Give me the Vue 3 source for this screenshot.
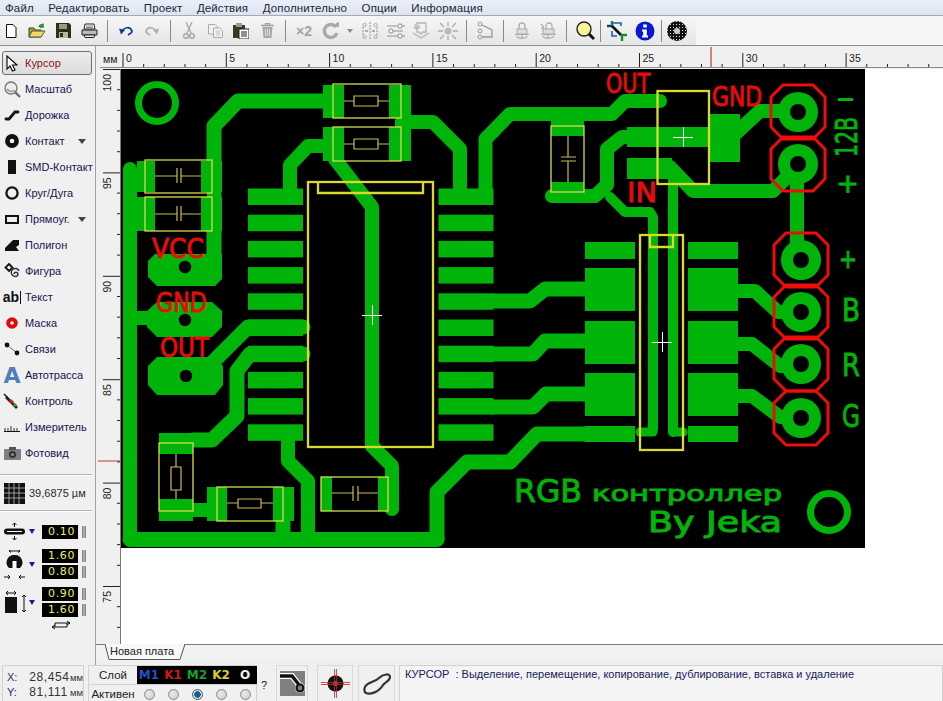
<script setup>
const menu = ['Файл', 'Редактировать', 'Проект', 'Действия', 'Дополнительно', 'Опции', 'Информация']

const hMajor = [0, 5, 10, 15, 20, 25, 30, 35, 40].map((n, i) => ({ n, x: 123 + 103.3 * i })).filter(t => t.x < 943)
const hMinor = []
for (let i = 0; i < 40; i++) { const x = 123 + 20.66 * i; if (i % 5 && x < 943) hMinor.push(x) }
const vMajor = [100, 95, 90, 85, 80, 75].map((n, i) => ({ n, y: 70 + 103.4 * i }))
const vMinor = []
for (let i = 0; i < 28; i++) { if (i % 5) vMinor.push(70 + 20.68 * i) }

const traces = [
  [15, 'M323 102H238L214 127V262'],
  [14, 'M130 170V540'],
  [15, 'M130 540.5H437'],
  [14, 'M323 147H308L290 166V192'],
  [14, 'M335 160L372 208V447L392 467V510'],
  [14, 'M402 123H433L460 150V192'],
  [14, 'M485.5 192V140L510 115H612L625 102H660'],
  [14, 'M552 197H595L607 186V150L622 138H660'],
  [14, 'M735 135L760 112H797'],
  [14, 'M670 168L693 192H773L797 168'],
  [14, 'M797 165V261'],
  [10, 'M673 177V433'],
  [10, 'M610 198L625 213H650L653 218V430'],
  [15, 'M585 435H537L510 463H467L437 493V540'],
  [15, 'M493 302H530L545 290H585'],
  [15, 'M493 355H533L545 342H585'],
  [15, 'M493 408H533L546 395H585'],
  [14, 'M738 292H755L778 313H798'],
  [14, 'M738 345H752L780 367H798'],
  [14, 'M738 397H752L780 418H798'],
  [15, 'M193 441H212L237 417V372L250 355H303'],
  [15, 'M213 363L248 328H303'],
  [14, 'M288 443V462L308 482V535'],
  [14, 'M193 511H207'],
  [15, 'M283 520V535'],
  [14, 'M130 319H150'],
  [14, 'M402 123V145'],
  [9, 'M640 433H653'],
  [9, 'M673 433H683'],
]

const pads = [
  [323, 86, 21, 33], [389, 86, 22, 33], [323, 128, 21, 34], [389, 128, 22, 34],
  [137, 162, 18, 31], [201, 162, 21, 31], [137, 198, 18, 34], [201, 198, 21, 34],
  [551, 118, 33, 19], [551, 183, 33, 20],
  [627, 128, 81, 20], [710, 115, 30, 48], [627, 159, 45, 21],
  [585, 243, 50, 17], [585, 269, 50, 43], [585, 322, 50, 43], [585, 374, 50, 43], [585, 427, 50, 16],
  [688, 243, 50, 17], [688, 269, 50, 43], [688, 322, 50, 43], [688, 374, 50, 43], [688, 427, 50, 16],
  [159, 434, 34, 21], [159, 500, 34, 22], [207, 488, 20, 34], [273, 488, 21, 34],
  [321, 478, 11, 34], [378, 478, 21, 34],
]
const pins = []
for (let i = 0; i < 10; i++) pins.push(189.5 + 26.2 * i)

const octPads = [
  '148,262 155,255 222,255 222,280 215,287 157,287 148,278',
  '147,312 157,303 212,303 222,312 222,328 212,338 157,338 147,328',
  '148,367 157,358 215,358 223,367 223,386 215,396 157,396 148,386',
]
const holes = [[185, 268], [185, 321], [186, 377]]
const rings = [[798, 113], [798, 165], [801, 261], [801, 313], [801, 365], [801, 419]]
function oct([x, y]) {
  const a = 27, c = 12
  return [[x - a + c, y - a], [x + a - c, y - a], [x + a, y - a + c], [x + a, y + a - c], [x + a - c, y + a], [x - a + c, y + a], [x - a, y + a - c], [x - a, y - a + c]].map(p => p.join(',')).join(' ')
}

const smdBoxes = [[333, 85, 68, 34], [333, 128, 68, 34], [145, 161, 67, 33], [145, 198, 67, 34], [551, 127, 33, 66], [159, 444, 34, 68], [217, 488, 66, 34], [321, 478, 67, 34]]
const symbols = [
  'M344 102H354M378 102H389M354 97H378V107H354Z',
  'M344 145H354M378 145H389M354 140H378V150H354Z',
  'M155 177H177M181 177H201M177 169V184M181 169V184',
  'M155 215H177M181 215H201M177 207V222M181 207V222',
  'M568 137V158M568 162V183M561 158H576M561 162H576',
  'M176 455V468M176 491V500M171 468H181V491H171Z',
  'M227 504H238M261 504H273M238 500H261V509H238Z',
  'M332 494H353M358 494H378M353 487V502M358 487V502',
]
const crosses = [[372, 316], [662, 343], [683, 138]]

const redLabels = [
  ['OUT', 606, 94, 44], ['GND', 712, 107, 50], ['IN', 627, 203, 30],
  ['VCC', 152, 259, 52], ['GND', 156, 313, 51], ['OUT', 160, 358, 49],
]
const greenLetters = [['+', 839, 269, 18, 26], ['B', 842, 322, 18, 32], ['R', 842, 377, 18, 32], ['G', 842, 428, 18, 32]]

const layers = [
  { t: 'M1', c: 'c-blue' }, { t: 'K1', c: 'c-red' }, { t: 'M2', c: 'c-green' }, { t: 'K2', c: 'c-yellow' }, { t: 'O', c: 'c-white' },
]
</script>

<template>
  <div class="app">
    <div class="menu">
      <span v-for="m in menu" :key="m" class="menu-item">{{ m }}</span>
    </div>

    <div class="toolbar">
      <div class="tools-on">
        <span class="tb"><svg width="14" height="14" viewBox="0 0 14 14"><path d="M2.5 .5H9L12 3.5V13.5H2.5Z" fill="#fff" stroke="#111"/></svg></span>
        <span class="tb"><svg width="18" height="16" viewBox="0 0 18 16"><path d="M1 5H6L7 7H13V14H1Z" fill="#b09a30" stroke="#443"/><path d="M1 14L4 8H17L13 14Z" fill="#f2d860" stroke="#554"/><path d="M11 4Q12 1 15 2M15 .5V4H12" fill="none" stroke="#1a7a1a" stroke-width="1.4"/></svg></span>
        <span class="tb"><svg width="15" height="15" viewBox="0 0 15 15"><path d="M0 0H13L15 2V15H0Z" fill="#2c3018"/><rect x="3" y="1" width="8" height="5" fill="#9a9a78"/><rect x="3" y="9" width="9" height="6" fill="#b8b8a0"/><rect x="4" y="10" width="3" height="4" fill="#2c3018"/></svg></span>
        <span class="tb"><svg width="17" height="15" viewBox="0 0 17 15"><path d="M4 1H13L14 6H3Z" fill="#fff" stroke="#222"/><path d="M1 7H16V12H1Z" fill="#bbb" stroke="#222"/><path d="M3 12H14L13 14.500H4Z" fill="#eee" stroke="#222"/><path d="M5 3H12M5 4.500H12" stroke="#555" stroke-width=".7"/></svg></span>
        <i class="sep"></i>
        <span class="tb"><svg width="14" height="11" viewBox="0 0 14 11"><path d="M3 7C5 2 11 1 13 6C13 8 11 9 9 10" fill="none" stroke="#123a9a" stroke-width="1.7"/><path d="M0 3.500L6 5L2 9.500Z" fill="#123a9a"/></svg></span>
        <span class="tb"><svg width="14" height="11" viewBox="0 0 14 11"><path d="M11 7C9 2 3 1 1 6C1 8 3 9 5 10" fill="none" stroke="#b0b0b0" stroke-width="1.7"/><path d="M14 3.500L8 5L12 9.500Z" fill="#b0b0b0"/></svg></span>
        <i class="sep"></i>
        <span class="tb"><svg width="12" height="17" viewBox="0 0 12 17"><path d="M3 0L8 11M9 0L4 11" stroke="#a8a8a8" stroke-width="1.3" fill="none"/><circle cx="3" cy="14" r="2.300" fill="none" stroke="#a0a0a0" stroke-width="1.3"/><circle cx="9" cy="14" r="2.300" fill="none" stroke="#a0a0a0" stroke-width="1.3"/></svg></span>
        <span class="tb"><svg width="15" height="14" viewBox="0 0 15 14"><path d="M.5 .5H7L9 2.500V10H.5Z" fill="#f2f2f2" stroke="#aaa"/><path d="M5.500 4H12L14.500 6.500V13.500H5.500Z" fill="#f6f6f6" stroke="#aaa"/><path d="M7.500 7H12.500M7.500 9H12.500M7.500 11H12.500" stroke="#bbb"/></svg></span>
        <span class="tb"><svg width="16" height="16" viewBox="0 0 16 16"><rect x="0" y="2" width="12" height="13" fill="#3a3a22"/><rect x="3" y="0" width="6" height="4" fill="#999"/><rect x="6" y="6" width="10" height="10" fill="#fff" stroke="#222"/><path d="M8 9H14M8 11H14M8 13H14" stroke="#223"/></svg></span>
        <span class="tb"><svg width="13" height="15" viewBox="0 0 13 15"><path d="M0 2.500H13M4.500 2.500V.5H8.500V2.500" fill="none" stroke="#a0a0a0" stroke-width="1.500"/><path d="M1.500 4H11.500L10.500 15H2.500Z" fill="#a8a8a8"/><path d="M4.500 6V13M6.500 6V13M8.500 6V13" stroke="#ddd"/></svg></span>
        <i class="sep"></i>
        <span class="tb x2">×2</span>
        <span class="tb wide"><svg width="18" height="18" viewBox="0 0 18 18"><path d="M14 5A6.500 6.500 0 1 0 15 11" fill="none" stroke="#aaa" stroke-width="3.400"/><path d="M10 5H17V-1Z" fill="#aaa"/></svg></span>
        <span class="drop"></span>
        <span class="tb"><svg width="16" height="18" viewBox="0 0 16 18"><path d="M8 0V18M1 5V13M15 5V13" stroke="#aaa" stroke-dasharray="2 1" stroke-width="1.300"/><path d="M3 9H6M10 9H13" stroke="#999" stroke-width="1.500"/><circle cx="2.500" cy="3" r="1.600" fill="none" stroke="#aaa"/><circle cx="13.500" cy="3" r="1.600" fill="none" stroke="#aaa"/><circle cx="2.500" cy="15" r="1.600" fill="none" stroke="#aaa"/><circle cx="13.500" cy="15" r="1.600" fill="none" stroke="#aaa"/></svg></span>
        <span class="tb"><svg width="20" height="18" viewBox="0 0 20 18"><path d="M1 4H19M1 14H19M3 9H17" stroke="#b0b0b0" stroke-width="1.500"/><circle cx="14" cy="4" r="2" fill="#fff" stroke="#aaa" stroke-width="1.300"/><circle cx="5" cy="9" r="2" fill="#fff" stroke="#aaa" stroke-width="1.300"/><circle cx="14" cy="14" r="2" fill="#fff" stroke="#aaa" stroke-width="1.300"/></svg></span>
        <span class="tb"><svg width="20" height="17" viewBox="0 0 20 17"><path d="M2 6H7V3M5 1H14V10H11L9 12L7 10H5ZM1 11L9 16L17 11" fill="none" stroke="#b4b4b4" stroke-width="1.300"/><path d="M3 2V6" stroke="#aaa"/></svg></span>
        <span class="tb"><svg width="20" height="18" viewBox="0 0 20 18"><circle cx="10" cy="9" r="3.500" fill="#bbb"/><path d="M10 0V4M10 14V18M0 9H5M15 9H20M2 1L6 5M18 1L14 5M2 17L6 13M18 17L14 13" stroke="#aaa" stroke-width="1.300"/></svg></span>
        <i class="sep"></i>
        <span class="tb"><svg width="17" height="19" viewBox="0 0 17 19"><circle cx="3" cy="3" r="2" fill="none" stroke="#999"/><circle cx="3" cy="10" r="2" fill="none" stroke="#999"/><circle cx="3" cy="16" r="2" fill="none" stroke="#999"/><path d="M5 4L15 9V16H5" fill="none" stroke="#999" stroke-width="1.300"/></svg></span>
        <i class="sep"></i>
        <span class="tb"><svg width="14" height="18" viewBox="0 0 14 18"><path d="M4 7V4A3 3 0 0 1 10 4V7" fill="none" stroke="#b0b0b0" stroke-width="1.400"/><rect x="2" y="7" width="10" height="5" fill="#ddd" stroke="#aaa"/><path d="M0 12.500H14M7 13V17M2 14C3 17 11 17 12 14" fill="none" stroke="#aaa" stroke-width="1.200"/></svg></span>
        <span class="tb"><svg width="16" height="18" viewBox="0 0 16 18"><path d="M6 7V4A3 3 0 0 1 12 4V7M1 2L4 5M1 6H4" fill="none" stroke="#b0b0b0" stroke-width="1.300"/><rect x="3" y="7" width="11" height="5" fill="#ddd" stroke="#aaa"/><path d="M1 12.500H16M8 13V17M3 14C4 17 12 17 14 14" fill="none" stroke="#aaa" stroke-width="1.200"/></svg></span>
        <i class="sep"></i>
        <span class="tb"><svg width="19" height="20" viewBox="0 0 19 20"><circle cx="8" cy="8" r="7" fill="#f7f39a" stroke="#222" stroke-width="1.400"/><path d="M13 13L18 18" stroke="#111" stroke-width="3"/></svg></span>
        <i class="sep tight"></i>
        <span class="tb wide2"><svg width="20" height="20" viewBox="0 0 20 20"><path d="M0 5H5" stroke="#0a30b0" stroke-width="2.400"/><path d="M5 0V5M15 14V20" stroke="#0a9030" stroke-width="2.400"/><path d="M5 5L14 14" stroke="#111" stroke-width="2.600"/><path d="M14 14H20" stroke="#0a9030" stroke-width="2.400"/><path d="M6 2H14V5M5 10V15H10" fill="none" stroke="#1060c0" stroke-width="1.600"/></svg></span>
        <span class="tb wide2"><svg width="20" height="20" viewBox="0 0 20 20"><circle cx="10" cy="10" r="9.500" fill="#0a18d0"/><rect x="8.200" y="3.500" width="3.600" height="3" fill="#fff"/><path d="M7 8.500H11.800V14.500H13V16.500H7V14.500H8.200V10.500H7Z" fill="#fff"/></svg></span>
        <i class="sep tight"></i>
        <span class="tb"><svg width="20" height="20" viewBox="0 0 20 20"><defs><pattern id="gridp" width="3" height="3" patternUnits="userSpaceOnUse"><rect width="3" height="3" fill="#111"/><rect width="1" height="1" fill="#ddd"/></pattern></defs><circle cx="10" cy="10" r="10" fill="url(#gridp)"/><circle cx="10" cy="10" r="3" fill="#ccc"/></svg></span>
      </div>
    </div>

    <div class="main">
      <aside class="side">
        <div class="tool active"><span class="ic"><svg width="12" height="17" viewBox="0 0 12 17"><path d="M1 1V14L4 11L6.500 16L9 15L6.500 10H11Z" fill="#fff" stroke="#111" stroke-width="1.200"/></svg></span>Курсор</div>
        <div class="tool"><span class="ic"><svg width="17" height="17" viewBox="0 0 17 17"><circle cx="7" cy="7" r="6" fill="#e8eee8" stroke="#777" stroke-width="1.300"/><path d="M3 8C5 11 9 11 11 9" stroke="#9a9a9a" stroke-width="1.500" fill="none"/><path d="M11 11L16 16" stroke="#666" stroke-width="2.200"/></svg></span>Масштаб</div>
        <div class="tool"><span class="ic"><svg width="16" height="12" viewBox="0 0 16 12"><path d="M2 10H5L11 3H14" fill="none" stroke="#111" stroke-width="2.800" stroke-linecap="round"/></svg></span>Дорожка</div>
        <div class="tool"><span class="ic"><svg width="14" height="14" viewBox="0 0 14 14"><circle cx="7" cy="7" r="4.600" fill="none" stroke="#111" stroke-width="4.600"/></svg></span>Контакт<i class="arr"></i></div>
        <div class="tool"><span class="ic"><svg width="8" height="14" viewBox="0 0 8 14"><rect width="8" height="14" fill="#111"/></svg></span>SMD-Контакт</div>
        <div class="tool"><span class="ic"><svg width="14" height="14" viewBox="0 0 14 14"><circle cx="7" cy="7" r="5.600" fill="none" stroke="#111" stroke-width="2.300"/></svg></span>Круг/Дуга</div>
        <div class="tool"><span class="ic"><svg width="14" height="9" viewBox="0 0 14 9"><rect x="1" y="1" width="12" height="7" fill="none" stroke="#111" stroke-width="2"/></svg></span>Прямоуг.<i class="arr"></i></div>
        <div class="tool"><span class="ic"><svg width="14" height="12" viewBox="0 0 14 12"><path d="M0 9L8 1H14V6L11 8L14 12H0Z" fill="#111"/></svg></span>Полигон</div>
        <div class="tool"><span class="ic"><svg width="17" height="16" viewBox="0 0 17 16"><path d="M5 1L8.500 4.500L5 8L1.500 4.500Z" fill="none" stroke="#111" stroke-width="1.800"/><path d="M10 11A2 2 0 1 1 13 13A4 4 0 1 1 15 8" fill="none" stroke="#334" stroke-width="1.500"/></svg></span>Фигура</div>
        <div class="tool"><span class="ic abtxt">ab<b class="cur"></b></span>Текст</div>
        <div class="tool"><span class="ic"><svg width="12" height="12" viewBox="0 0 12 12"><circle cx="6" cy="6" r="5.800" fill="#e00a0a"/><circle cx="6" cy="6" r="1.800" fill="#fff"/></svg></span>Маска</div>
        <div class="tool"><span class="ic"><svg width="16" height="14" viewBox="0 0 16 14"><path d="M3 3L13 11" stroke="#555" stroke-width=".9"/><circle cx="3" cy="3" r="2.400" fill="#111"/><circle cx="13" cy="11" r="2.400" fill="#111"/></svg></span>Связи</div>
        <div class="tool"><span class="ic autoA">A</span>Автотрасса</div>
        <div class="tool"><span class="ic"><svg width="18" height="17" viewBox="0 0 18 17"><path d="M1 1L5 5" stroke="#111" stroke-width="1.500"/><path d="M4 3L15 14L13 16L2 5Z" fill="#222"/><path d="M7 7L10 10" stroke="#d02020" stroke-width="3"/><path d="M11 11L13 13" stroke="#30a040" stroke-width="3"/></svg></span>Контроль</div>
        <div class="tool"><span class="ic"><svg width="16" height="9" viewBox="0 0 16 9"><path d="M0 8.500H16" stroke="#111"/><path d="M1 8V5M4 8V5M7 8V3M10 8V5M13 8V5" stroke="#333"/></svg></span>Измеритель</div>
        <div class="tool"><span class="ic"><svg width="17" height="13" viewBox="0 0 17 13"><rect x="0" y="2" width="17" height="11" rx="1" fill="#7a8088"/><rect x="5" y="0" width="7" height="3" fill="#555"/><circle cx="8.500" cy="7.500" r="3.600" fill="#333"/><circle cx="8.500" cy="7.500" r="1.600" fill="#b08050"/></svg></span>Фотовид</div>

        <div class="hr first"></div>
        <div class="gridrow">
          <svg width="21" height="21" viewBox="0 0 21 21"><rect width="21" height="21" fill="#111"/><path d="M5 0V21M10 0V21M15 0V21M0 5H21M0 10H21M0 15H21" stroke="#bbb" stroke-width=".8"/></svg>
          <span>39,6875 µм</span>
        </div>
        <div class="hr"></div>

        <div class="wgroup g1">
          <span class="wic"><svg width="21" height="17" viewBox="0 0 21 17"><path d="M10.500 0V4M10.500 13V17" stroke="#111"/><path d="M8.500 2L10.500 0L12.500 2M8.500 15L10.500 17L12.500 15" fill="none" stroke="#111"/><rect x="0" y="5.500" width="21" height="6" rx="3" fill="#111"/><path d="M3 8.500H18" stroke="#fff"/></svg></span>
          <i class="tri"></i>
          <div class="vals"><div class="val">0.10<i class="spin"></i></div></div>
        </div>
        <div class="wgroup g2">
          <span class="wic"><svg width="21" height="29" viewBox="0 0 21 29"><path d="M5 1H16M5 1L7 -.5M16 1L14 -.5M5 1L7 2.500M16 1L14 2.500" stroke="#111" fill="none"/><path d="M10.500 5A7.500 7.500 0 0 0 5 18H16A7.500 7.500 0 0 0 10.500 5Z" fill="#111"/><rect x="8.500" y="11" width="4" height="7.500" fill="#fff"/><path d="M0 27H6M15 27H21M6 27L4 25M6 27L4 29M15 27L17 25M15 27L17 29" stroke="#111" fill="none"/></svg></span>
          <i class="tri"></i>
          <div class="vals"><div class="val">1.60<i class="spin"></i></div><div class="val">0.80<i class="spin"></i></div></div>
        </div>
        <div class="wgroup g3">
          <span class="wic"><svg width="24" height="24" viewBox="0 0 24 24"><path d="M2 3H12M2 3L4 1M2 3L4 5M12 3L10 1M12 3L10 5" stroke="#111" fill="none"/><rect x="1" y="7" width="12" height="16" fill="#111"/><path d="M20 5V22M20 5L18 7M20 5L22 7M20 22L18 20M20 22L22 20" stroke="#111" fill="none"/></svg></span>
          <i class="tri"></i>
          <div class="vals"><div class="val">0.90<i class="spin"></i></div><div class="val">1.60<i class="spin"></i></div></div>
        </div>
        <svg class="swap" width="20" height="10" viewBox="0 0 20 10"><path d="M1 7H16M4 3H19M1 7L4 5M1 7L4 9M19 3L16 1M19 3L16 5M4 3V7M16 3V7" fill="none" stroke="#111"/></svg>
      </aside>

      <section class="work">
        <div class="hruler">
          <svg width="847" height="23" viewBox="96 47 847 23">
            <text x="103" y="64" class="rtxt">мм</text>
            <path d="M100 68.500H943" stroke="#8a8a8a"/>
            <g v-for="t in hMajor" :key="t.n">
              <path :d="`M${t.x} 54V68`" stroke="#222"/>
              <text :x="t.x + 3" y="63" class="rtxt">{{ t.n }}</text>
            </g>
            <path v-for="x in hMinor" :key="x" :d="`M${x} 65V68`" stroke="#222"/>
            <path d="M711 48V68" stroke="#b01818"/>
          </svg>
        </div>
        <div class="view">
          <div class="vruler">
            <svg width="25" height="575" viewBox="96 70 25 575">
              <path d="M120.500 70V645" stroke="#7a7a7a"/>
              <g v-for="t in vMajor" :key="t.n">
                <path :d="`M103 ${t.y + .5}H120`" stroke="#222"/>
                <text :transform="`translate(111 ${t.y + 5}) rotate(-90)`" text-anchor="end" class="rtxt">{{ t.n }}</text>
              </g>
              <path v-for="y in vMinor" :key="y" :d="`M117 ${y}H120`" stroke="#222"/>
              <path d="M98 462H120" stroke="#c03030"/>
            </svg>
          </div>
          <div class="canvas">
            <svg width="822" height="575" viewBox="121 70 822 575">
              <rect x="121" y="70" width="744" height="479" fill="#000"/>
              <g fill="#00b40a">
                <rect v-for="(p, i) in pads" :key="'p' + i" :x="p[0]" :y="p[1]" :width="p[2]" :height="p[3]"/>
                <template v-for="y in pins" :key="y">
                  <rect x="248" :y="y" width="55" height="16.500"/>
                  <rect x="438.500" :y="y" width="55" height="16.500"/>
                </template>
                <polygon v-for="(o, i) in octPads" :key="'o' + i" :points="o"/>
              </g>
              <g fill="none" stroke="#00b40a" stroke-linejoin="round" stroke-linecap="round">
                <path v-for="(t, i) in traces" :key="'t' + i" :stroke-width="t[0]" :d="t[1]"/>
              </g>
              <rect x="137" y="194" width="70" height="4" fill="#000"/>
              <circle cx="157" cy="104" r="18.500" fill="none" stroke="#00b40a" stroke-width="7"/>
              <circle cx="829" cy="513" r="18.500" fill="none" stroke="#00b40a" stroke-width="7"/>
              <circle v-for="(h, i) in holes" :key="'h' + i" :cx="h[0]" :cy="h[1]" r="6.200" fill="#000"/>
              <g v-for="(r, i) in rings" :key="'r' + i">
                <circle :cx="r[0]" :cy="r[1]" r="20" fill="#00b40a"/>
                <circle :cx="r[0]" :cy="r[1]" r="8" fill="#000"/>
              </g>
              <polygon v-for="(r, i) in rings" :key="'ro' + i" :points="oct(r)" fill="none" stroke="#ee0c0c" stroke-width="3"/>

              <g fill="none" stroke="#d6dc50" stroke-width="1.300">
                <rect v-for="(b, i) in smdBoxes" :key="'b' + i" :x="b[0]" :y="b[1]" :width="b[2]" :height="b[3]"/>
              </g>
              <g fill="none" stroke="#c8bc50" stroke-width="1.200">
                <path v-for="(s, i) in symbols" :key="'s' + i" :d="s"/>
              </g>
              <g fill="none" stroke="#dcd92e" stroke-width="2.300">
                <rect x="308" y="183" width="125" height="265"/>
                <path d="M318 183V194H423V183"/>
                <rect x="657.500" y="92" width="51.500" height="93"/>
                <rect x="640" y="236" width="43" height="215"/>
                <path d="M650 236V248H673V236"/>
              </g>
              <g stroke="#fff" stroke-width="1">
                <path v-for="(c, i) in crosses" :key="'c' + i" :d="`M${c[0] - 10} ${c[1] + .5}H${c[0] + 10}M${c[0] + .5} ${c[1] - 10}V${c[1] + 10}`"/>
              </g>
              <text v-for="(l, i) in redLabels" :key="'l' + i" :x="l[1]" :y="l[2]" :textLength="l[3]" lengthAdjust="spacingAndGlyphs" class="silk red">{{ l[0] }}</text>
              <text v-for="(l, i) in greenLetters" :key="'g' + i" :x="l[1]" :y="l[2]" :textLength="l[3]" lengthAdjust="spacingAndGlyphs" :font-size="l[4]" class="silk green">{{ l[0] }}</text>
              <text transform="translate(857 158) rotate(-90)" textLength="40" lengthAdjust="spacingAndGlyphs" font-size="31" class="silk green">12В</text>
              <text transform="translate(856 196) rotate(-90)" font-size="26" class="silk green">+</text>
              <rect x="838" y="99" width="15" height="3" fill="#00b40a"/>
              <text x="514" y="503" textLength="68" lengthAdjust="spacingAndGlyphs" font-size="32" class="silk green">RGB</text>
              <text x="592" y="502" textLength="190" lengthAdjust="spacingAndGlyphs" font-size="22" class="silk green">контроллер</text>
              <text x="648" y="533" textLength="134" lengthAdjust="spacingAndGlyphs" font-size="28" class="silk green">By Jeka</text>
            </svg>
          </div>
        </div>
        <div class="tabs">
          <div class="tab">
            <svg class="tabshape" width="90" height="16" viewBox="0 0 90 16"><path d="M0 0L4 15.500H75L80 0" fill="#f8f8f8" stroke="#555"/></svg>
            <span class="tabtxt">Новая плата</span>
          </div>
        </div>
      </section>
    </div>

    <footer class="status">
      <div class="coords">
        <div class="crow"><span>X:</span><b>28,454</b><small>мм</small></div>
        <div class="crow"><span>Y:</span><b>81,111</b><small>мм</small></div>
      </div>
      <div class="layers">
        <div class="lrow">
          <span class="lhead">Слой</span>
          <span class="lblack"><b v-for="l in layers" :key="l.t" :class="l.c">{{ l.t }}</b></span>
        </div>
        <div class="lrow second">
          <span class="lhead">Активен</span>
          <span class="lradios"><i v-for="(l, i) in layers" :key="l.t" class="radio" :class="{ on: i === 2 }"></i></span>
        </div>
      </div>
      <span class="q">?</span>
      <div class="ibox b1"><svg width="25" height="25" viewBox="0 0 25 25"><rect width="25" height="25" fill="#808080"/><path d="M0 5H12L20 15" fill="none" stroke="#fff" stroke-width="6"/><circle cx="20" cy="17" r="5" fill="#fff"/><path d="M0 5H12L20 15" fill="none" stroke="#111" stroke-width="3.500"/><circle cx="20" cy="17" r="3.500" fill="#808080" stroke="#111" stroke-width="2.200"/></svg></div>
      <div class="ibox b2"><svg width="29" height="29" viewBox="0 0 29 29"><circle cx="14.500" cy="14.500" r="8" fill="#111"/><circle cx="14.500" cy="14.500" r="2.500" fill="#666"/><path d="M0 13.500H29M0 15.500H29M13.500 0V29M15.500 0V29" stroke="#d02020" stroke-width=".8"/></svg></div>
      <div class="ibox b3"><svg width="30" height="24" viewBox="0 0 30 24"><path d="M3 15C5 10 13 10 17 6C21 2 28 1 28 5C28 9 24 9 21 13C17 20 8 23 4 21C2 20 2 17 3 15Z" fill="none" stroke="#333" stroke-width="2.200"/></svg></div>
      <div class="msg">КУРСОР&nbsp; : Выделение, перемещение, копирование, дублирование, вставка и удаление</div>
    </footer>
  </div>
</template>

<style>
html, body { margin: 0; padding: 0; background: #f0f0f0; }
</style>

<style scoped>
.app { width: 943px; height: 701px; display: flex; flex-direction: column; overflow: hidden; background: #f0f0f0; font-family: "Liberation Sans", Arial, sans-serif; font-size: 11px; color: #15154f; }
.menu { height: 15px; display: flex; background: linear-gradient(#e9eef8, #dee5f1); border-bottom: 1px solid #a6a9b0; padding-left: 5px; align-items: center; color: #20283c; font-size: 11.500px; letter-spacing: .12px; }
.menu-item { margin-right: 14.500px; white-space: nowrap; }
.toolbar { height: 30px; background: #f5f5f5; border-bottom: 1px solid #8e8e8e; box-sizing: border-box; display: flex; }
.tools-on { display: flex; align-items: center; background: linear-gradient(#f6f6f6, #e6e6e6); height: 29px; width: 698px; margin-left: -2px; }
.tb { width: 26px; height: 22px; display: flex; align-items: center; justify-content: center; flex: none; }
.tb.wide { width: 28px; }
.tb.wide2 { width: 28px; }
.sep { width: 1px; height: 22px; margin: 0 5px; background: #8a8a8a; flex: none; }
.sep.tight { margin: 0 2px; }
.x2 { font-weight: bold; font-size: 14px; color: #a4a4a4; font-family: "Liberation Sans", sans-serif; }
.drop { width: 0; height: 0; border: 3px solid transparent; border-top: 4px solid #8a8a8a; border-bottom: 0; margin: 0 4px 0 2px; flex: none; }

.main { flex: 1; display: flex; min-height: 0; }
.side { width: 95px; flex: none; padding-top: 4px; box-sizing: border-box; position: relative; }
.tool { height: 26px; display: flex; align-items: center; padding-left: 25px; position: relative; white-space: nowrap; box-sizing: border-box; font-size: 11px; color: #15154f; }
.tool.active { color: #8c1414; }
.tool.active::before { content: ""; position: absolute; left: 2px; right: 3px; top: 1px; bottom: 1px; border: 1px solid #6e6e6e; border-radius: 3px; background: linear-gradient(#ececec, #dcdcdc); }
.tool.active { z-index: 0; }
.tool.active::before { z-index: -1; }
.ic { position: absolute; left: 0; width: 24px; top: 0; bottom: 0; display: flex; align-items: center; justify-content: center; }
.abtxt { font-weight: bold; font-size: 14px; color: #111; font-family: "Liberation Sans", sans-serif; }
.cur { display: inline-block; width: 1px; height: 13px; background: #111; margin-left: 1px; }
.autoA { font-family: "DejaVu Sans", sans-serif; font-weight: bold; font-size: 22px; color: #4e80b8; }
.arr { position: absolute; left: 78px; top: 11px; border: 4px solid transparent; border-top: 5px solid #444; border-bottom: 0; }
.hr { height: 1px; background: #b4b4b4; border-bottom: 1px solid #fff; margin-right: 3px; }
.hr.first { margin-top: 8px; }
.gridrow { height: 34px; display: flex; align-items: center; padding-left: 4px; gap: 4px; font-size: 11px; color: #2a2a2a; }
.wgroup { display: flex; align-items: center; position: relative; }
.g1 { margin-top: 11px; }
.g2 { margin-top: 9px; }
.g3 { margin-top: 8px; }
.wic { width: 29px; display: flex; justify-content: flex-start; padding-left: 4px; box-sizing: border-box; flex: none; }
.tri { width: 0; height: 0; border: 3.500px solid transparent; border-top: 5px solid #1a1aa0; border-bottom: 0; margin-right: 7px; flex: none; }
.vals { display: flex; flex-direction: column; gap: 2px; }
.val { width: 36px; height: 14px; background: #000; color: #ecec70; font-size: 11px; line-height: 14px; text-align: right; padding-right: 3px; box-sizing: border-box; position: relative; letter-spacing: .6px; font-family: "DejaVu Sans", sans-serif; }
.spin { position: absolute; left: 40px; top: 1px; width: 4px; height: 12px; background: linear-gradient(90deg, #777, #bbb 50%, #777); }
.swap { display: block; margin: 3px 0 0 51px; }

.work { flex: 1; display: flex; flex-direction: column; min-width: 0; border-left: 1px solid #a0a0a0; }
.hruler { height: 23px; flex: none; }
.hruler svg, .vruler svg, .canvas svg { display: block; }
.rtxt { font: 10.500px "Liberation Sans", sans-serif; fill: #222; }
.view { height: 575px; display: flex; flex: none; }
.vruler { width: 25px; flex: none; }
.canvas { flex: 1; background: #fff; }
.silk { font-family: "DejaVu Sans", sans-serif; stroke-width: .9px; }
.red { font-size: 27px; fill: #e80c0c; stroke: #e80c0c; }
.green { fill: #00b40a; stroke: #00b40a; }
.tabs { height: 15px; background: #f2f2f2; border-top: 1px solid #7a7a7a; box-sizing: border-box; position: relative; }
.tab { position: absolute; left: 9px; top: -1px; width: 90px; height: 16px; }
.tabshape { position: absolute; left: 0; top: 0; }
.tabtxt { position: absolute; left: 5px; top: 1px; color: #222; white-space: nowrap; font-size: 11px; }

.status { height: 36px; flex: none; display: flex; align-items: flex-start; }
.coords { width: 82px; height: 36px; margin-left: 2px; border: 1px solid #d2d2d2; border-bottom: 0; box-sizing: border-box; flex: none; padding: 4px 0 0 4px; }
.crow { display: flex; align-items: baseline; height: 15px; line-height: 15px; color: #20305a; }
.crow span { width: 25px; }
.crow b { width: 46px; font-weight: normal; font-size: 12px; letter-spacing: .6px; color: #333; }
.crow small { font-size: 9.500px; color: #333; }
.layers { margin-left: 4px; width: 169px; flex: none; border: 1px solid #d2d2d2; border-bottom: 0; height: 36px; box-sizing: border-box; }
.lrow { display: flex; height: 18px; align-items: stretch; }
.lrow.second { border-top: 1px solid #d2d2d2; }
.lhead { width: 48px; text-align: center; line-height: 18px; color: #222; flex: none; font-size: 11.500px; white-space: nowrap; }
.lblack { width: 120px; background: #000; display: grid; grid-template-columns: repeat(5, 24px); align-items: center; justify-items: center; font-family: "DejaVu Sans", sans-serif; font-size: 12px; }
.lblack b { font-weight: bold; }
.c-blue { color: #2050c8; }
.c-red { color: #d01818; }
.c-green { color: #18a028; }
.c-yellow { color: #d8d030; }
.c-white { color: #f0f0f0; }
.lradios { width: 120px; display: grid; grid-template-columns: repeat(5, 24px); align-items: center; justify-items: center; }
.radio { width: 11px; height: 11px; border-radius: 50%; border: 1px solid #8c8c8c; box-sizing: border-box; background: radial-gradient(circle at 40% 40%, #ececec, #c4c4c4); }
.radio.on { background: radial-gradient(circle, #10609a 0 3px, #e0e0e0 3.500px); border-color: #555; }
.q { width: 18px; text-align: center; padding-top: 14px; color: #222; flex: none; text-indent: -4px; }
.ibox { height: 36px; display: flex; align-items: center; justify-content: center; flex: none; border: 1px solid #d8d8d8; border-bottom: 0; box-sizing: border-box; }
.b1 { width: 32px; margin-left: 1px; }
.b2 { width: 36px; margin-left: 9px; }
.b3 { width: 37px; margin-left: 5px; }
.msg { margin-left: 4px; flex: 1; height: 36px; border: 1px solid #d2d2d2; border-bottom: 0; box-sizing: border-box; padding: 2px 0 0 5px; color: #15205a; white-space: nowrap; background: #f4f4f4; }
</style>
